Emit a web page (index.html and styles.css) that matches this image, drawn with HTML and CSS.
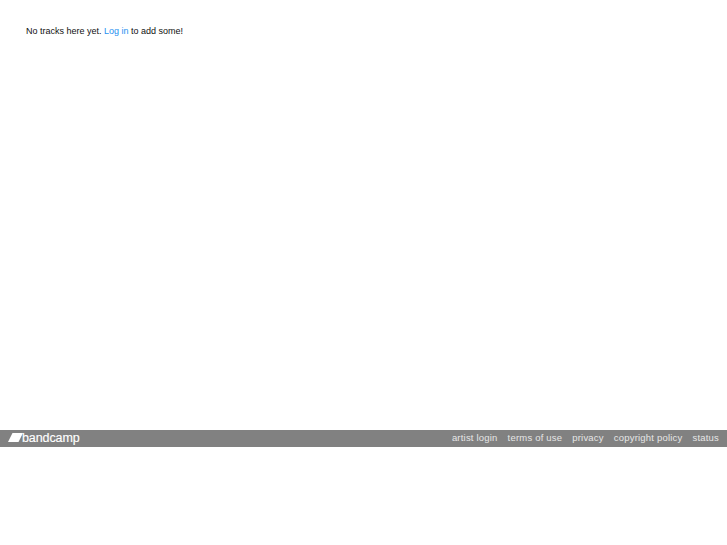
FILE: index.html
```html
<!DOCTYPE html>
<html lang="en">
<head>
<meta charset="utf-8">
<title>Bandcamp</title>
<link rel="stylesheet" href="styles.css">
</head>
<body>
<main class="content">
<p class="message">No tracks here yet. <a class="login" href="#">Log in</a> to add some!</p>
</main>
<footer class="footer">
<a class="brand" href="#">
<svg class="mark" width="15" height="9" viewBox="0 0 15 9"><polygon points="4.5,0 15,0 10.5,9 0,9" fill="#fff"/></svg>
<span class="wordmark">bandcamp</span>
</a>
<nav class="links">
<a href="#">artist login</a>
<a href="#">terms of use</a>
<a href="#">privacy</a>
<a href="#">copyright policy</a>
<a href="#">status</a>
</nav>
</footer>
</body>
</html>
```
FILE: styles.css
```css
html, body { margin: 0; padding: 0; background: #fff; }
body { font-family: "Liberation Sans", Arial, sans-serif; }
.content { height: 430px; padding: 25px 26px 0; box-sizing: border-box; }
.message { margin: 0; font-size: 9px; line-height: 13px; color: #111; }
.login { color: #1f90f0; text-decoration: none; }
.footer {
  height: 17px;
  box-sizing: border-box;
  background: #818181;
  display: flex;
  align-items: center;
  justify-content: space-between;
  padding: 0 8px 2px 7.5px;
}
.brand { display: flex; align-items: center; text-decoration: none; color: #fff; }
.mark { display: block; }
.wordmark { font-size: 12.5px; font-weight: 400; letter-spacing: -0.1px; color: #fff; margin-left: -0.5px; -webkit-text-stroke: 0.15px #fff; }
.links { display: flex; gap: 10px; }
.links a { color: #e6e6e6; font-size: 9.5px; letter-spacing: 0.2px; text-decoration: none; }
```
